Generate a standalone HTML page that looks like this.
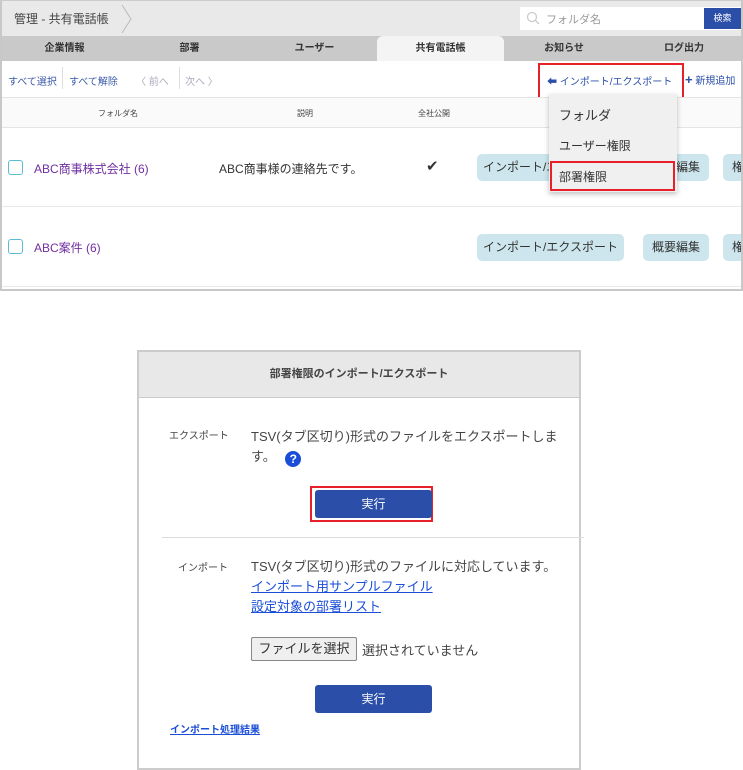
<!DOCTYPE html>
<html><head><meta charset="utf-8"><style>
*{margin:0;padding:0;box-sizing:border-box}
body{width:743px;height:767px;background:#fff;font-family:"Liberation Sans","Noto Sans CJK JP",sans-serif;position:relative;overflow:hidden;color:#333}
.a{position:absolute}
.top{left:0;top:0;width:743px;height:291px;border:2px solid #c8c8c8;border-top:1px solid #ccc;overflow:hidden}
.t{font-size:11px;white-space:nowrap}
.tab{top:35px;height:25px;font-size:10px;font-weight:bold;color:#333;text-align:center;line-height:25px}
.btn{background:#cde6ee;border-radius:5px;height:27px;line-height:27px;font-size:12px;color:#333;text-align:center}
.cb{width:15px;height:15px;border:1.5px solid #5bbcd6;border-radius:3px}
.link{color:#7030a0;font-size:12px}
.blue{background:#2b4fa8;color:#fff;border-radius:3px;text-align:center;font-size:12px}
</style></head><body>
<div class="a top">
 <div class="a" style="left:0;top:0;width:743px;height:35px;background:#e9e9e9"></div>
 <div class="a t" style="left:12px;top:9px;font-size:12px;color:#444">管理 - 共有電話帳</div>
 <svg class="a" style="left:118px;top:3px" width="14" height="30"><path d="M2 1 L11 15 L2 29" fill="none" stroke="#bbb"/></svg>
 <div class="a" style="left:518px;top:6px;width:222px;height:23px;background:#fff"></div>
 <svg class="a" style="left:524px;top:10px" width="14" height="14"><circle cx="6" cy="6" r="4.5" fill="none" stroke="#ccc" stroke-width="1.3"/><path d="M9.5 9.5 L13 13" stroke="#ccc" stroke-width="1.3"/></svg>
 <div class="a t" style="left:544px;top:10px;color:#999">フォルダ名</div>
 <div class="a blue" style="left:702px;top:7px;width:37px;height:21px;line-height:21px;font-size:9px;border-radius:0">検索</div>
 <div class="a" style="left:0;top:35px;width:743px;height:25px;background:#c9c9c9"></div>
 <div class="a" style="left:375px;top:35px;width:127px;height:25px;background:#f4f4f4;border-radius:6px 6px 0 0"></div>
 <div class="a tab" style="left:0;width:125px">企業情報</div>
 <div class="a tab" style="left:125px;width:125px">部署</div>
 <div class="a tab" style="left:250px;width:125px">ユーザー</div>
 <div class="a tab" style="left:375px;width:127px">共有電話帳</div>
 <div class="a tab" style="left:502px;width:120px">お知らせ</div>
 <div class="a tab" style="left:622px;width:120px">ログ出力</div>
 <div class="a t" style="left:6px;top:72px;font-size:10px;color:#3a5aa8">すべて選択</div>
 <div class="a" style="left:60px;top:66px;width:1px;height:22px;background:#ddd"></div>
 <div class="a t" style="left:67px;top:72px;font-size:10px;color:#3a5aa8">すべて解除</div>
 <div class="a t" style="left:134px;top:72px;font-size:10px;color:#aab">〈 前へ</div>
 <div class="a" style="left:177px;top:66px;width:1px;height:22px;background:#ddd"></div>
 <div class="a t" style="left:183px;top:72px;font-size:10px;color:#aab">次へ 〉</div>
 <div class="a t" style="left:545px;top:72px;font-size:10px;color:#2b4fa8">⬅ インポート/エクスポート</div>
 <div class="a t" style="left:683px;top:71px;font-size:10px;color:#2b4fa8"><b style="font-size:13px">+</b> 新規追加</div>
 <div class="a" style="left:536px;top:62px;width:146px;height:38px;border:2px solid #e8202a"></div>
 <div class="a" style="left:0;top:96px;width:743px;height:31px;background:#fafafa;border-top:1px solid #e4e4e4;border-bottom:1px solid #e4e4e4"></div>
 <div class="a t" style="left:96px;top:107px;font-size:8px;color:#444">フォルダ名</div>
 <div class="a t" style="left:295px;top:107px;font-size:8px;color:#444">説明</div>
 <div class="a t" style="left:416px;top:107px;font-size:8px;color:#444">全社公開</div>
 <div class="a cb" style="left:6px;top:159px"></div>
 <div class="a link" style="left:32px;top:159px">ABC商事株式会社 (6)</div>
 <div class="a t" style="left:217px;top:159px;font-size:12px">ABC商事様の連絡先です。</div>
 <div class="a" style="left:424px;top:156px;font-size:15px">✔</div>
 <div class="a btn" style="left:475px;top:153px;width:147px">インポート/エクスポート</div>
 <div class="a btn" style="left:641px;top:153px;width:66px">概要編集</div>
 <div class="a btn" style="left:721px;top:153px;width:30px">権</div>
 <div class="a" style="left:0;top:205px;width:743px;height:1px;background:#e8e8e8"></div>
 <div class="a cb" style="left:6px;top:238px"></div>
 <div class="a link" style="left:32px;top:238px">ABC案件 (6)</div>
 <div class="a btn" style="left:475px;top:233px;width:147px">インポート/エクスポート</div>
 <div class="a btn" style="left:641px;top:233px;width:66px">概要編集</div>
 <div class="a btn" style="left:721px;top:233px;width:30px">権</div>
 <div class="a" style="left:0;top:285px;width:743px;height:1px;background:#e8e8e8"></div>
 <div class="a" style="left:547px;top:93px;width:128px;height:98px;background:#f0f0f0;box-shadow:0 2px 5px rgba(0,0,0,.25)"></div>
 <div class="a t" style="left:557px;top:104px;font-size:13px">フォルダ</div>
 <div class="a t" style="left:557px;top:136px;font-size:12px">ユーザー権限</div>
 <div class="a t" style="left:557px;top:167px;font-size:12px">部署権限</div>
 <div class="a" style="left:548px;top:160px;width:125px;height:30px;border:2px solid #e8202a"></div>
</div>
<div class="a" style="left:137px;top:350px;width:444px;height:420px;border:2px solid #ccc;background:#fff">
 <div class="a" style="left:0;top:0;width:440px;height:46px;background:#e8e8e8;border-bottom:1px solid #ccc;text-align:center;line-height:44px;font-size:11px;font-weight:bold;color:#444">部署権限のインポート/エクスポート</div>
 <div class="a t" style="left:30px;top:75px;font-size:10px;color:#444">エクスポート</div>
 <div class="a" style="left:112px;top:75px;width:312px;font-size:13px;line-height:20px;color:#444">TSV(タブ区切り)形式のファイルをエクスポートします。 <span style="display:inline-block;width:16px;height:16px;border-radius:50%;background:#1a4ed8;color:#fff;font-size:12px;font-weight:bold;text-align:center;line-height:16px;margin-left:6px;vertical-align:-2px">?</span></div>
 <div class="a" style="left:171px;top:134px;width:123px;height:36px;border:2.5px solid #e8202a"></div>
 <div class="a blue" style="left:176px;top:138px;width:117px;height:28px;line-height:28px">実行</div>
 <div class="a" style="left:23px;top:185px;width:422px;height:1px;background:#ddd"></div>
 <div class="a t" style="left:39px;top:207px;font-size:10px;color:#444">インポート</div>
 <div class="a" style="left:112px;top:205px;font-size:13px;line-height:20px;color:#444;white-space:nowrap">TSV(タブ区切り)形式のファイルに対応しています。<br><span style="color:#1a4ed8;text-decoration:underline">インポート用サンプルファイル</span><br><span style="color:#1a4ed8;text-decoration:underline">設定対象の部署リスト</span></div>
 <div class="a" style="left:112px;top:285px;width:106px;height:24px;background:#efefef;border:1px solid #888;border-radius:2px;font-size:13px;line-height:22px;text-align:center;color:#333">ファイルを選択</div>
 <div class="a t" style="left:223px;top:288px;font-size:13px;color:#444">選択されていません</div>
 <div class="a blue" style="left:176px;top:333px;width:117px;height:28px;line-height:28px">実行</div>
 <div class="a t" style="left:31px;top:369px;font-size:10px;font-weight:bold;color:#1a4ed8;text-decoration:underline">インポート処理結果</div>
</div>
</body></html>
